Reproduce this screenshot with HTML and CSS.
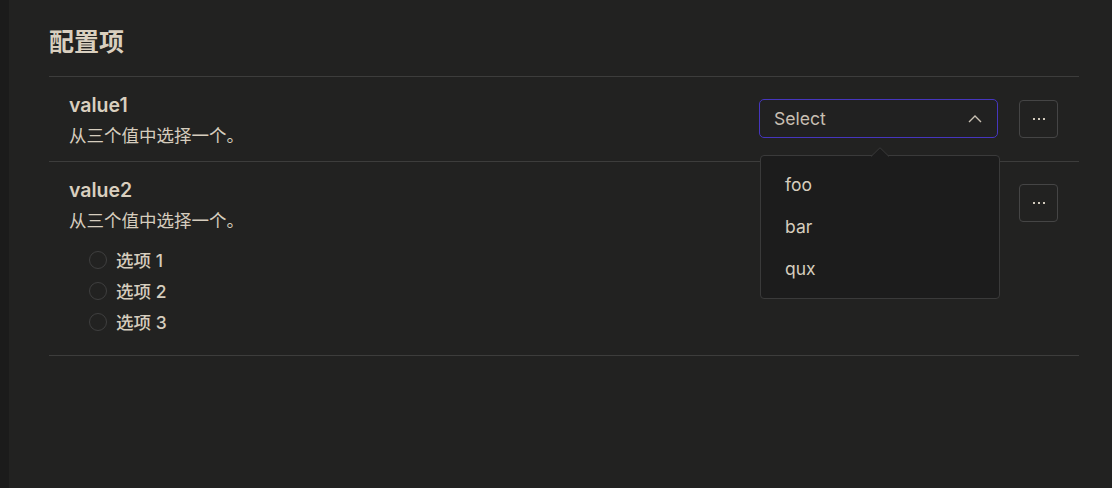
FILE: index.html
```html
<!DOCTYPE html>
<html lang="zh">
<head>
<meta charset="utf-8">
<link rel="stylesheet" href="styles.css">
</head>
<body>
<div class="app">
  <aside class="strip"></aside>
  <main class="main">
    <h1 class="title">配置项</h1>
    <div class="list">
      <div class="row">
        <div class="info">
          <div class="name">value1</div>
          <div class="desc">从三个值中选择一个。</div>
        </div>
        <div class="controls">
          <div class="select-wrap">
            <div class="select">
              <span class="select-text">Select</span>
              <svg class="chev" width="14" height="9" viewBox="0 0 14 9"><path d="M1 8 L7 2 L13 8" fill="none" stroke="#c9c1b4" stroke-width="1.4"/></svg>
            </div>
            <div class="dropdown">
              <svg class="arrow" width="18" height="10" viewBox="0 0 18 10"><path d="M0 9.5 L9 0.7 L18 9.5" fill="#1c1c1c" stroke="#3a3a3a" stroke-width="1"/></svg>
              <div class="opt">foo</div>
              <div class="opt">bar</div>
              <div class="opt">qux</div>
            </div>
          </div>
          <button class="more"><span></span><span></span><span></span></button>
        </div>
      </div>
      <div class="row row2">
        <div class="info">
          <div class="name">value2</div>
          <div class="desc">从三个值中选择一个。</div>
          <div class="radios">
            <label class="radio"><span class="circle"></span>选项 1</label>
            <label class="radio"><span class="circle"></span>选项 2</label>
            <label class="radio"><span class="circle"></span>选项 3</label>
          </div>
        </div>
        <div class="controls">
          <button class="more"><span></span><span></span><span></span></button>
        </div>
      </div>
    </div>
  </main>
</div>
</body>
</html>
```
FILE: styles.css
```css
* { box-sizing: border-box; }
html, body { margin: 0; height: 100%; }
body {
  background: #222221;
  color: #d8cfc0;
  font-family: Inter, "Noto Sans CJK SC", sans-serif;
}
.app { display: flex; height: 488px; }
.strip { width: 9px; background: #1b1b1b; flex: none; }
.main { flex: 1; padding: 26px 33px 0 40px; }
.title {
  margin: 0;
  font-size: 25px;
  line-height: 32px;
  font-weight: 700;
  color: #d9cfbf;
  padding-bottom: 18px;
  border-bottom: 1px solid #3d3d3c;
}
.row {
  display: flex;
  justify-content: space-between;
  align-items: flex-start;
  padding: 16px 20px 13px 20px;
  border-bottom: 1px solid #3d3d3c;
}
.row2 { padding-bottom: 18px; }
.name { font-size: 19.5px; line-height: 24px; font-weight: 600; color: #d9cfbf; }
.desc { font-size: 17.5px; line-height: 24px; margin-top: 7px; color: #d6cdbe; }
.radios { margin-top: 11px; padding-left: 20px; }
.radio {
  display: flex; align-items: center; height: 31px;
  font-size: 17.5px; font-weight: 500; color: #d6cdbe;
}
.circle {
  width: 18px; height: 18px; border-radius: 50%;
  border: 1px solid #3f3f3f; margin-right: 9px;
}
.controls { display: flex; align-items: center; gap: 21px; margin-top: 6px; margin-right: 1px; }
.select-wrap { position: relative; }
.select {
  width: 239px; height: 39px;
  border: 1px solid #4636be;
  border-radius: 5px;
  background: #212121;
  display: flex; align-items: center; justify-content: space-between;
  padding: 0 15px 0 14px;
  font-size: 17.6px; color: #c8bfb2;
}
.chev { display: block; }
.more {
  width: 39px; height: 38px;
  border: 1px solid #454545; border-radius: 4px;
  background: transparent;
  display: flex; align-items: center; justify-content: center; gap: 3px;
  padding: 0;
}
.more span { width: 2px; height: 2px; background: #d0c8bb; }
.dropdown {
  position: absolute;
  top: 56px; left: 1px;
  width: 240px;
  padding: 8px 0;
  background: #1c1c1c;
  border: 1px solid #3a3a3a;
  border-radius: 4px;
  z-index: 2;
}
.arrow { position: absolute; top: -9px; left: 110px; display: block; }
.opt { height: 42px; line-height: 42px; padding-left: 24px; font-size: 17.5px; color: #d6cdbe; }
```
